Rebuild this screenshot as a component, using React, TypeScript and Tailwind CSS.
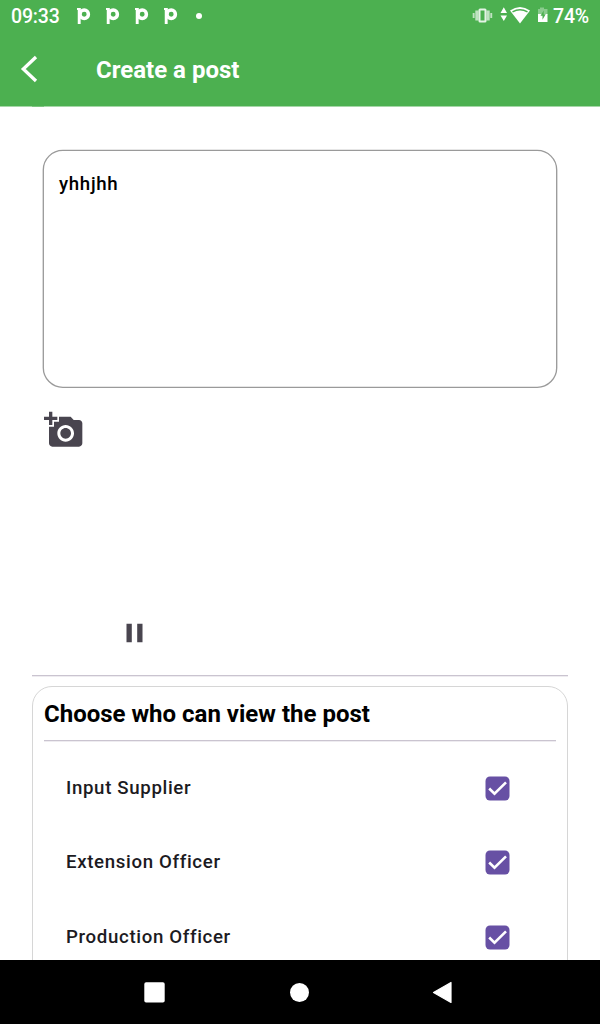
import React from "react";

const roles = ["Input Supplier", "Extension Officer", "Production Officer"];

function NotificationMark() {
  return (
    <svg width="14" height="18" viewBox="0 0 14 18" fill="none">
      <path d="M0 2h3.500" stroke="#fff" strokeWidth="2" />
      <path d="M2.200 1v16" stroke="#fff" strokeWidth="2.900" />
      <circle cx="7.200" cy="7.200" r="4.200" stroke="#fff" strokeWidth="3.500" />
    </svg>
  );
}

function StatusBar() {
  return (
    <div className="flex h-8 items-start text-[19.500px] font-medium leading-[33px] text-white">
      <span className="ml-[11px] w-[65.500px] tracking-[-0.150px]">09:33</span>
      <div className="mt-[7px] flex gap-[15px]">
        <NotificationMark />
        <NotificationMark />
        <NotificationMark />
        <NotificationMark />
      </div>
      <span className="ml-[18px] mt-[13px] size-[6px] rounded-full bg-white" />
      <div className="ml-auto flex">
        <svg className="mt-[6px]" width="81" height="20" viewBox="0 0 81 20" fill="none">
          <g fill="#fff" opacity="0.650">
            <rect x="0.700" y="7" width="1.900" height="5" />
            <rect x="3.300" y="4.500" width="3.200" height="10" />
            <rect x="14.500" y="4.500" width="3.200" height="10" />
            <rect x="18.300" y="7" width="1.900" height="5" />
          </g>
          <rect x="7.500" y="3.500" width="6" height="12" rx="0.500" stroke="#fff" strokeOpacity="0.850" strokeWidth="2" />
          <path d="M28.500 7h6.500L31.800 1.200zM28.500 9.500h6.500l-3.200 5.500z" fill="#fff" />
          <path d="M38 4.500Q48-2.500 58 4.500L48 17.500z" fill="#fff" />
          <path d="M40.500 5.900Q48 1.500 55.500 5.900" stroke="#4CB050" strokeWidth="1.400" />
          <path d="M68 1.500h4V3h3.500v6H66V3h2z" fill="#fff" opacity="0.350" />
          <path d="M66 8h9.500v8H66z" fill="#fff" />
          <path d="M71.700 4.500L68.500 9.800h2v4l3.200-5.500h-2z" fill="#4CB050" />
        </svg>
        <span className="mr-[11px] w-9 tracking-[-0.200px]">74%</span>
      </div>
    </div>
  );
}

function Check() {
  return (
    <svg width="25" height="25" viewBox="0 0 25 25" fill="none">
      <rect x="0.500" y="0.500" width="24" height="24" rx="4.500" fill="#6750A4" />
      <path d="M4.200 12.500l5.300 5.200L21 6.300" stroke="#fff" strokeWidth="2.600" />
    </svg>
  );
}

export default function App() {
  return (
    <div className="flex h-[1024px] w-[600px] flex-col overflow-hidden bg-white font-['Roboto','Liberation_Sans',sans-serif]">
      <header className="h-[106px] shrink-0 bg-[#4CB050]">
        <StatusBar />
        <div className="flex h-[74px] items-center">
          <svg className="ml-5" width="18" height="28" viewBox="0 0 18 28" fill="none">
            <path d="M16 2L3.300 14 16 26" stroke="#fff" strokeWidth="3.300" />
          </svg>
          <h1 className="ml-[58px] mt-[2px] text-[24px] font-bold leading-8 text-white">Create a post</h1>
        </div>
      </header>
      <div className="h-px shrink-0 bg-[#a6d7a8]">
        <div className="ml-8 h-px w-3 bg-[#7cc47f]" />
      </div>

      <main className="flex min-h-0 flex-1 flex-col overflow-hidden px-8">
        <svg className="-mb-[237px] ml-[10px] mt-[42px] shrink-0" width="516" height="240" viewBox="0 0 516 240" fill="none">
          <rect x="1.300" y="1.400" width="513.400" height="236.900" rx="19.500" stroke="#9a9a9a" strokeWidth="1.330" />
        </svg>
        <div className="mx-[11px] h-[236px] shrink-0 pl-[16px] pt-[20px] text-[18.670px] font-medium leading-6 tracking-[0.670px] text-black">
          yhhjhh
        </div>
        <svg className="ml-3 mt-[22px] shrink-0" width="40" height="40" viewBox="0 0 24 24" fill="#49454F">
          <path d="M3 4V1h2v3h3v2H5v3H3V6H0V4h3zm3 6V7h3V4h7l1.830 2H21c1.100 0 2 .9 2 2v12c0 1.100-.9 2-2 2H5c-1.100 0-2-.9-2-2V10h3zm7 9c2.760 0 5-2.240 5-5s-2.240-5-5-5-5 2.240-5 5 2.240 5 5 5zm-3.200-5c0 1.770 1.430 3.200 3.200 3.200s3.200-1.430 3.200-3.200-1.430-3.200-3.200-3.200-3.200 1.430-3.200 3.200z" />
        </svg>
        <svg className="ml-[86px] mt-[167px] shrink-0" width="33" height="32" viewBox="0 0 33 32" fill="#49454F">
          <path d="M8.500 6.700h5.300v18.600H8.500zM19.200 6.700h5.300v18.600h-5.300z" />
        </svg>
        <div className="mt-[26px] flex h-[2px] shrink-0 flex-col">
          <div className="h-px bg-[#CAC4D0]" />
          <div className="h-px bg-[#eeecf0]" />
        </div>
        <section className="mt-[9px] h-[400px] shrink-0 rounded-t-[20px] border-[1.330px] border-[#d6d6d6] px-[11px]">
          <h2 className="flex h-[53px] items-center text-[24px] font-bold leading-8 text-black">
            Choose who can view the post
          </h2>
          <div className="h-px bg-[#CAC4D0]" />
          <div className="h-px bg-[#eeecf0]" />
          <ul className="mt-[8.800px]">
            {roles.map((role) => (
              <li key={role} className="flex h-[74.500px] items-center justify-between pl-[22px] pr-[46px]">
                <span className="mb-[0.600px] text-[18.670px] font-medium leading-6 tracking-[0.650px] text-[#1C1B1F]">{role}</span>
                <Check />
              </li>
            ))}
          </ul>
        </section>
      </main>

      <nav className="h-16 shrink-0 bg-black">
        <svg width="600" height="64" viewBox="0 0 600 64" fill="#fff">
          <rect x="144.300" y="22.200" width="20.400" height="20.400" rx="1.800" />
          <circle cx="299.500" cy="32.500" r="9.500" />
          <path d="M433.500 32.500L451 22.500v20z" stroke="#fff" strokeWidth="1.200" strokeLinejoin="round" />
        </svg>
      </nav>
    </div>
  );
}
